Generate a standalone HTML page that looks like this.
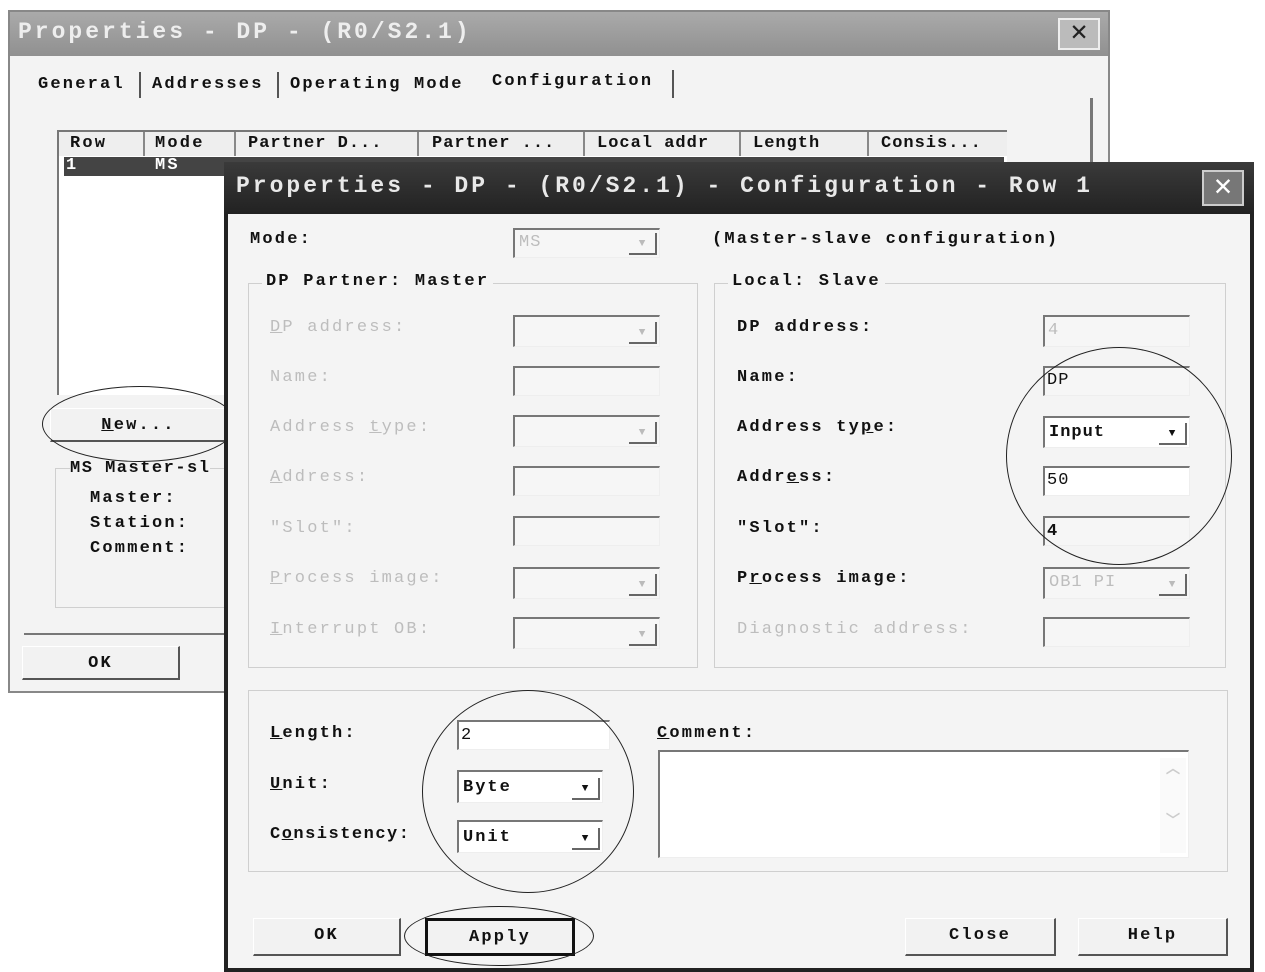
<!DOCTYPE html>
<html><head><meta charset="utf-8"><style>
*{margin:0;padding:0;box-sizing:border-box}
body{width:1265px;height:972px;background:#fff;position:relative;overflow:hidden;font-family:"Liberation Mono",monospace;font-weight:bold;font-size:17px;color:#111;letter-spacing:2.2px}
.a{position:absolute}
.t{position:absolute;white-space:pre;line-height:20px}
.d{color:#bdbdbd;font-weight:normal}
.fld{position:absolute;background:#f6f6f6;border-top:2px solid #777;border-left:2px solid #777;border-right:1px solid #eee;border-bottom:1px solid #eee;letter-spacing:1px}
.wf{background:#fff}
.btn{position:absolute;background:#f2f2f2;border-right:2px solid #555;border-bottom:2px solid #555;border-top:1px solid #fff;border-left:1px solid #fff;text-align:center;line-height:34px}
.grp{position:absolute;border:1px solid #cfcfcf}
.arr{position:absolute;right:2px;bottom:2px;width:28px;height:22px;border-right:2px solid #666;border-bottom:2px solid #666;font-size:11px;text-align:center;line-height:22px;letter-spacing:0}
.ell{position:absolute;border:1.5px solid #222;border-radius:50%}
</style></head><body>
<!-- outer dialog -->
<div class="a" style="left:8px;top:10px;width:1102px;height:683px;background:#f3f3f3;border:2px solid #888"></div>
<div class="a" style="left:10px;top:12px;width:1098px;height:44px;background:linear-gradient(#aaa,#909090)"></div>
<div class="t" style="left:18px;top:22px;font-size:23px;color:#eee;letter-spacing:3px">Properties - DP - (R0/S2.1)</div>
<div class="a" style="left:1058px;top:18px;width:42px;height:32px;background:#bbb;border:2px solid #eee;color:#222;font-size:28px;text-align:center;line-height:28px;letter-spacing:0">✕</div>
<div class="t" style="left:38px;top:75px">General</div>
<div class="a" style="left:139px;top:72px;width:2px;height:26px;background:#555"></div>
<div class="t" style="left:152px;top:75px">Addresses</div>
<div class="a" style="left:277px;top:72px;width:2px;height:26px;background:#555"></div>
<div class="t" style="left:290px;top:75px">Operating Mode</div>
<div class="t" style="left:492px;top:72px">Configuration</div>
<div class="a" style="left:672px;top:70px;width:2px;height:28px;background:#555"></div>
<div class="a" style="left:1090px;top:98px;width:3px;height:540px;background:#777"></div>
<div class="a" style="left:57px;top:130px;width:950px;height:265px;background:#fff;border-top:2px solid #777;border-left:2px solid #777"></div>
<div class="a" style="left:59px;top:132px;width:948px;height:24px;background:#eee"></div>
<div class="t" style="left:70px;top:134px">Row</div><div class="t" style="left:155px;top:134px">Mode</div>
<div class="t" style="left:248px;top:134px;letter-spacing:1px">Partner D...</div><div class="t" style="left:432px;top:134px;letter-spacing:1px">Partner ...</div>
<div class="t" style="left:597px;top:134px;letter-spacing:1px">Local addr</div><div class="t" style="left:753px;top:134px;letter-spacing:1px">Length</div><div class="t" style="left:881px;top:134px;letter-spacing:1px">Consis...</div>
<div class="a" style="left:143px;top:132px;width:2px;height:24px;background:#888"></div>
<div class="a" style="left:234px;top:132px;width:2px;height:24px;background:#888"></div>
<div class="a" style="left:417px;top:132px;width:2px;height:24px;background:#888"></div>
<div class="a" style="left:583px;top:132px;width:2px;height:24px;background:#888"></div>
<div class="a" style="left:739px;top:132px;width:2px;height:24px;background:#888"></div>
<div class="a" style="left:867px;top:132px;width:2px;height:24px;background:#888"></div>
<div class="a" style="left:64px;top:157px;width:940px;height:19px;background:#444"></div>
<div class="t" style="left:66px;top:156px;color:#fff">1</div><div class="t" style="left:155px;top:156px;color:#fff">MS</div>
<div class="btn" style="left:50px;top:408px;width:176px;height:34px;border-right:none"><u>N</u>ew...</div>
<div class="grp" style="left:55px;top:468px;width:180px;height:140px"></div>
<div class="t" style="left:70px;top:459px;background:#f3f3f3;letter-spacing:1.5px">MS Master-sl</div>
<div class="t" style="left:90px;top:489px">Master:</div>
<div class="t" style="left:90px;top:514px">Station:</div>
<div class="t" style="left:90px;top:539px">Comment:</div>
<div class="a" style="left:24px;top:633px;width:210px;height:2px;background:#777"></div>
<div class="btn" style="left:22px;top:646px;width:158px;height:34px">OK</div>
<div class="ell" style="left:42px;top:386px;width:195px;height:76px"></div>

<!-- inner dialog -->
<div class="a" style="left:224px;top:162px;width:1030px;height:810px;background:#f4f4f4;border:4px solid #222;border-top:none"></div>
<div class="a" style="left:224px;top:162px;width:1030px;height:52px;background:linear-gradient(#3a3a3a,#222)"></div>
<div class="t" style="left:236px;top:176px;font-size:23px;color:#e8e8e8;letter-spacing:3px">Properties - DP - (R0/S2.1) - Configuration - Row 1</div>
<div class="a" style="left:1202px;top:170px;width:42px;height:36px;background:#777;border:2px solid #ccc;color:#fff;font-size:30px;text-align:center;line-height:32px;letter-spacing:0">✕</div>

<div class="t" style="left:250px;top:230px">Mode:</div>
<div class="fld" style="left:513px;top:228px;width:147px;height:30px"><span class="t d" style="left:4px;top:3px">MS</span><div class="arr" style="color:#bbb">▼</div></div>
<div class="t" style="left:712px;top:230px">(Master-slave configuration)</div>

<div class="grp" style="left:248px;top:283px;width:450px;height:385px"></div>
<div class="t" style="left:262px;top:272px;background:#f4f4f4;padding:0 4px">DP Partner: Master</div>
<div class="grp" style="left:714px;top:283px;width:512px;height:385px"></div>
<div class="t" style="left:728px;top:272px;background:#f4f4f4;padding:0 4px">Local: Slave</div>

<div class="t d" style="left:270px;top:318px"><u>D</u>P address:</div>
<div class="t d" style="left:270px;top:368px">Name:</div>
<div class="t d" style="left:270px;top:418px">Address <u>t</u>ype:</div>
<div class="t d" style="left:270px;top:468px"><u>A</u>ddress:</div>
<div class="t d" style="left:270px;top:519px">"Slot":</div>
<div class="t d" style="left:270px;top:569px"><u>P</u>rocess image:</div>
<div class="t d" style="left:270px;top:620px"><u>I</u>nterrupt OB:</div>
<div class="fld" style="left:513px;top:315px;width:147px;height:32px"><div class="arr" style="color:#bbb">▼</div></div>
<div class="fld" style="left:513px;top:366px;width:147px;height:30px"></div>
<div class="fld" style="left:513px;top:415px;width:147px;height:32px"><div class="arr" style="color:#bbb">▼</div></div>
<div class="fld" style="left:513px;top:466px;width:147px;height:30px"></div>
<div class="fld" style="left:513px;top:516px;width:147px;height:30px"></div>
<div class="fld" style="left:513px;top:567px;width:147px;height:32px"><div class="arr" style="color:#bbb">▼</div></div>
<div class="fld" style="left:513px;top:617px;width:147px;height:32px"><div class="arr" style="color:#bbb">▼</div></div>

<div class="t" style="left:737px;top:318px">DP address:</div>
<div class="t" style="left:737px;top:368px">Name:</div>
<div class="t" style="left:737px;top:418px">Address ty<u>p</u>e:</div>
<div class="t" style="left:737px;top:468px">Addr<u>e</u>ss:</div>
<div class="t" style="left:737px;top:519px">"Slot":</div>
<div class="t" style="left:737px;top:569px">P<u>r</u>ocess image:</div>
<div class="t d" style="left:737px;top:620px">Diagnostic address:</div>
<div class="fld" style="left:1043px;top:315px;width:147px;height:32px"><span class="t d" style="left:3px;top:4px">4</span></div>
<div class="fld" style="left:1043px;top:366px;width:147px;height:30px"><span class="t" style="left:2px;top:3px;font-weight:normal">DP</span></div>
<div class="fld wf" style="left:1043px;top:416px;width:147px;height:32px"><span class="t" style="left:4px;top:5px">Input</span><div class="arr">▼</div></div>
<div class="fld wf" style="left:1043px;top:466px;width:147px;height:30px"><span class="t" style="left:2px;top:3px;font-weight:normal">50</span></div>
<div class="fld" style="left:1043px;top:516px;width:147px;height:30px"><span class="t" style="left:2px;top:4px">4</span></div>
<div class="fld" style="left:1043px;top:567px;width:147px;height:32px"><span class="t d" style="left:4px;top:4px">OB1 PI</span><div class="arr" style="color:#bbb">▼</div></div>
<div class="fld" style="left:1043px;top:617px;width:147px;height:30px"></div>
<div class="ell" style="left:1006px;top:347px;width:226px;height:218px"></div>

<div class="grp" style="left:248px;top:690px;width:980px;height:182px"></div>
<div class="t" style="left:270px;top:724px"><u>L</u>ength:</div>
<div class="t" style="left:270px;top:775px"><u>U</u>nit:</div>
<div class="t" style="left:270px;top:825px;letter-spacing:1.5px">C<u>o</u>nsistency:</div>
<div class="fld wf" style="left:457px;top:720px;width:153px;height:30px"><span class="t" style="left:2px;top:4px;font-weight:normal">2</span></div>
<div class="fld wf" style="left:457px;top:770px;width:146px;height:33px"><span class="t" style="left:4px;top:6px;letter-spacing:2px">Byte</span><div class="arr">▼</div></div>
<div class="fld wf" style="left:457px;top:820px;width:146px;height:33px"><span class="t" style="left:4px;top:6px;letter-spacing:2px">Unit</span><div class="arr">▼</div></div>
<div class="ell" style="left:422px;top:690px;width:212px;height:203px"></div>
<div class="t" style="left:657px;top:724px"><u>C</u>omment:</div>
<div class="fld wf" style="left:658px;top:750px;width:531px;height:108px"><div class="a" style="right:2px;top:6px;width:26px;height:95px;background:#fafafa;color:#ccc;font-size:14px;text-align:center;letter-spacing:0">︿<br><br><br>﹀</div></div>

<div class="btn" style="left:253px;top:918px;width:148px;height:38px">OK</div>
<div class="btn" style="left:425px;top:918px;width:150px;height:38px;border:3px solid #111">Apply</div>
<div class="ell" style="left:404px;top:906px;width:190px;height:60px"></div>
<div class="btn" style="left:905px;top:918px;width:151px;height:38px">Close</div>
<div class="btn" style="left:1078px;top:918px;width:150px;height:38px">Help</div>
</body></html>
